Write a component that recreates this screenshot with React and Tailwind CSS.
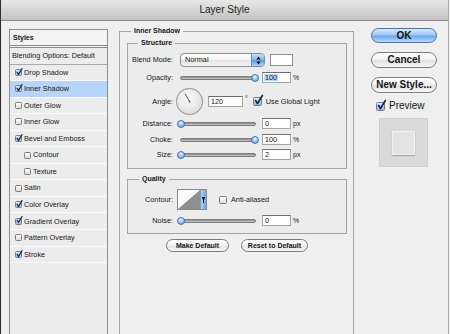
import React from "react";

function Check({ on, className = "" }) {
  return (
    <span
      className={`relative shrink-0 rounded-[1.5px] border border-[#7b7b7b] ${
        on
          ? "bg-[linear-gradient(to_bottom,#dcecfd,#8cbcf1)]"
          : "bg-[linear-gradient(to_bottom,#ffffff,#dcdcdc)]"
      } ${className}`}
    >
      {on && (
        <svg
          className="absolute left-[0px] top-[-25%] w-[125%] h-[125%] overflow-visible"
          viewBox="0 0 10 10"
        >
          <path
            d="M1.8 5.2 L4 8.6 L9.6 -0.6"
            fill="none"
            stroke="#14285c"
            strokeWidth="1.9"
            strokeLinecap="round"
            strokeLinejoin="round"
          />
        </svg>
      )}
    </span>
  );
}

const items = [
  ["Drop Shadow", true, 0, false],
  ["Inner Shadow", true, 0, true],
  ["Outer Glow", false, 0, false],
  ["Inner Glow", false, 0, false],
  ["Bevel and Emboss", true, 0, false],
  ["Contour", false, 1, false],
  ["Texture", false, 1, false],
  ["Satin", false, 0, false],
  ["Color Overlay", true, 0, false],
  ["Gradient Overlay", true, 0, false],
  ["Pattern Overlay", false, 0, false],
  ["Stroke", true, 0, false],
];

function StyleList() {
  return (
    <div className="mt-[8px] w-[99px] h-[320px] shrink-0 border border-[#8e8e8e] bg-[#ececec] flex flex-col">
      <div className="h-[18px] shrink-0 border-b-[3px] border-double border-[#8a8a8a] bg-[#f3f3f3] pl-[3px] flex items-center text-[7px] font-bold leading-none">
        Styles
      </div>
      <div className="h-[16.5px] shrink-0 border-b border-[#a9a9a9] pl-[2px] flex items-center text-[7.3px] leading-none">
        Blending Options: Default
      </div>
      {items.map(([label, on, lvl, sel]) => (
        <div
          key={label}
          className={`h-[16.55px] shrink-0 border-b border-[#fafafa] flex items-center gap-[2px] text-[7.3px] leading-none ${
            lvl ? "pl-[14px]" : "pl-[5px]"
          } ${sel ? "bg-[#b7d5f8]" : ""}`}
        >
          <Check on={on} className="w-[7px] h-[7px]" />
          <span>{label}</span>
        </div>
      ))}
    </div>
  );
}

function Slider({ value }) {
  return (
    <div className="relative ml-[4px] w-[82px] h-[9px] shrink-0 flex items-center">
      <div className="mx-[3px] flex-1 h-[4px] rounded-full border border-[#7c7c7c] bg-[linear-gradient(to_bottom,#8a8a8a,#c9c9c9)]" />
      <div
        className="absolute top-[0.5px] w-[8px] h-[8px] rounded-full border border-[#4a77b3] bg-[radial-gradient(circle_at_50%_30%,#eaf4ff,#86bbf1_60%,#4e8fdc)]"
        style={{ left: (value / 100) * 74 }}
      />
    </div>
  );
}

function Field({ children, className = "" }) {
  return (
    <div
      className={`h-[11px] shrink-0 border border-[#a4a4a4] border-t-[#6f6f6f] bg-white pl-[1px] flex items-center text-[7.3px] leading-none ${className}`}
    >
      {children}
    </div>
  );
}

function Label({ children }) {
  return (
    <span className="w-[45px] shrink-0 text-right text-[7.3px] leading-none">
      {children}
    </span>
  );
}

function SliderRow({ label, value, text, unit, sel, className = "" }) {
  return (
    <div className={`h-[11px] flex items-center ${className}`}>
      <Label>{label}</Label>
      <Slider value={value} />
      <Field className="ml-[3px] w-[29px]">
        {sel ? <span className="bg-[#b5d5fe] px-[1px]">{text}</span> : <span className="px-[1px]">{text}</span>}
      </Field>
      <span className="ml-[2px] text-[7px] leading-none">{unit}</span>
    </div>
  );
}

function Dial() {
  return (
    <svg width="29" height="29" viewBox="0 0 29 29" className="ml-[2px] shrink-0">
      <defs>
        <radialGradient id="dialg" cx="45%" cy="40%" r="65%">
          <stop offset="0" stopColor="#ffffff" />
          <stop offset="1" stopColor="#d9d9d9" />
        </radialGradient>
      </defs>
      <circle cx="14.5" cy="14.5" r="13.7" fill="#c9c9c9" />
      <circle cx="14.5" cy="14.5" r="13" fill="url(#dialg)" stroke="#8b8b8b" strokeWidth="0.8" />
      <line x1="14.5" y1="14.5" x2="10" y2="6.7" stroke="#444" strokeWidth="0.9" />
      <circle cx="14.5" cy="14.5" r="0.9" fill="#444" />
    </svg>
  );
}

function Main() {
  return (
    <fieldset className="mt-[5px] ml-[11px] w-[235px] h-[330px] min-w-0 shrink-0 border border-[#a5a5a5] pl-[7px] pr-[6px] pt-[2px]">
      <legend className="ml-[4px] px-[3px] text-[7px] font-bold leading-[10px]">
        Inner Shadow
      </legend>

      <fieldset className="min-w-0 border border-[#a5a5a5] bg-[#ececec] pt-[5px] pb-[8px]">
        <legend className="ml-[10px] px-[3px] text-[7px] font-bold leading-[10px]">
          Structure
        </legend>
        <div className="h-[14px] flex items-center">
          <Label>Blend Mode:</Label>
          <div className="ml-[7px] w-[85px] h-[14px] shrink-0 rounded-[4px] border border-[#8c8c8c] bg-[linear-gradient(to_bottom,#ffffff,#f2f2f2_50%,#e3e3e3_51%,#f5f5f5)] flex items-center overflow-hidden">
            <span className="flex-1 pl-[4px] text-[7.3px] leading-none">Normal</span>
            <div className="w-[13px] h-full border-l border-[#6a8fc2] bg-[linear-gradient(to_bottom,#c8e0fb,#80b4ef_50%,#5a9ae6_51%,#a9d0f8)] flex items-center justify-center">
              <svg width="5" height="9" viewBox="0 0 5 9">
                <path d="M2.5 0.6 L4.6 3.6 L0.4 3.6Z M2.5 8.4 L4.6 5.4 L0.4 5.4Z" fill="#111" />
              </svg>
            </div>
          </div>
          <div className="ml-[5px] w-[23px] h-[12px] shrink-0 border border-[#8f8f8f] bg-white" />
        </div>

        <SliderRow className="mt-[5px]" label="Opacity:" value={100} text="100" unit="%" sel />

        <div className="mt-[4px] h-[29px] flex items-center">
          <Label>Angle:</Label>
          <Dial />
          <Field className="ml-[4px] w-[35px]">
            <span className="px-[1px]">120</span>
          </Field>
          <span className="ml-[2px] self-start mt-[8px] text-[7px] leading-none">°</span>
          <Check on className="ml-[5px] w-[9px] h-[9px]" />
          <span className="ml-[4px] text-[7.3px] leading-none whitespace-nowrap">Use Global Light</span>
        </div>

        <SliderRow className="mt-[2px]" label="Distance:" value={0} text="0" unit="px" />
        <SliderRow className="mt-[5px]" label="Choke:" value={100} text="100" unit="%" />
        <SliderRow className="mt-[4px]" label="Size:" value={0} text="2" unit="px" />
      </fieldset>

      <fieldset className="mt-[5px] min-w-0 border border-[#a5a5a5] bg-[#ececec] pt-[5px] pb-[7px]">
        <legend className="ml-[11px] px-[3px] text-[7px] font-bold leading-[10px]">
          Quality
        </legend>
        <div className="h-[21px] flex items-center">
          <Label>Contour:</Label>
          <div className="ml-[4px] w-[30px] h-[21px] shrink-0 border border-[#8a8a8a] flex overflow-hidden">
            <svg className="w-[22px] h-full" viewBox="0 0 22 19" preserveAspectRatio="none">
              <rect width="22" height="19" fill="#ffffff" />
              <polygon points="0,19 22,0 22,19" fill="#8e8e8e" />
            </svg>
            <div className="flex-1 border-l border-[#7a9cc8] bg-[linear-gradient(to_right,#b3d4f8,#6ea8ea)] flex items-center justify-center">
              <svg width="3" height="6" viewBox="0 0 3 6">
                <path d="M0 0 H3 L2 3.6 V6 H1 V3.6Z" fill="#000" />
              </svg>
            </div>
          </div>
          <Check className="ml-[12px] w-[8px] h-[8px]" />
          <span className="ml-[4px] text-[7.3px] leading-none">Anti-aliased</span>
        </div>
        <SliderRow className="mt-[5px]" label="Noise:" value={0} text="0" unit="%" />
      </fieldset>

      <div className="mt-[5px] flex justify-center gap-[12px]">
        <button className="w-[63px] h-[13px] rounded-full border border-[#7b7b7b] bg-[linear-gradient(to_bottom,#ffffff,#f1f1f1_50%,#e2e2e2_51%,#f6f6f6)] text-[7px] font-bold leading-none">
          Make Default
        </button>
        <button className="w-[67px] h-[13px] rounded-full border border-[#7b7b7b] bg-[linear-gradient(to_bottom,#ffffff,#f1f1f1_50%,#e2e2e2_51%,#f6f6f6)] text-[7px] font-bold leading-none">
          Reset to Default
        </button>
      </div>
    </fieldset>
  );
}

function Right() {
  return (
    <div className="ml-[17px] mt-[7px] w-[66px] shrink-0 flex flex-col">
      <button className="h-[15px] rounded-full border border-[#4c72a8] bg-[linear-gradient(to_bottom,#d6e9fd,#9dc9f6_45%,#6aa9ed_55%,#b8dcfd)] text-[10px] font-bold leading-none">
        OK
      </button>
      <button className="mt-[9px] h-[16px] rounded-full border border-[#7e7e7e] bg-[linear-gradient(to_bottom,#ffffff,#f3f3f3_45%,#e1e1e1_55%,#f7f7f7)] text-[10px] font-bold leading-none">
        Cancel
      </button>
      <button className="mt-[9px] h-[16px] rounded-full border border-[#7e7e7e] bg-[linear-gradient(to_bottom,#ffffff,#f3f3f3_45%,#e1e1e1_55%,#f7f7f7)] text-[10px] font-bold leading-none whitespace-nowrap">
        New Style...
      </button>
      <div className="mt-[8px] h-[10px] pl-[5px] flex items-center gap-[4px]">
        <Check on className="w-[9px] h-[9px]" />
        <span className="text-[10px] leading-none">Preview</span>
      </div>
      <div className="mt-[7px] ml-[8px] w-[49px] h-[49px] border border-[#cfcfcf] bg-[#d9d9d9] bg-[radial-gradient(#c9c9c9_0.6px,transparent_0.7px)] bg-[length:2px_2px] flex items-center justify-center">
        <div className="w-[23px] h-[24px] border border-[#f1f1f1] bg-[#e3e3e3] shadow-[0_1px_1px_#a6a6a6]" />
      </div>
    </div>
  );
}

export default function App() {
  return (
    <div className="w-[450px] h-[334px] bg-[#f6f6f6]">
      <div className="w-[449px] h-[334px] overflow-hidden bg-[#efefef] border-l border-r border-l-[#2e2e2e] border-r-[#a9a9a9] flex flex-col font-['Liberation_Sans',Arial,sans-serif] text-[#161616]">
        <div className="h-[21px] shrink-0 border-b border-[#8c8c8c] bg-[linear-gradient(to_bottom,#e8e8e8,#c2c2c2)] flex items-center justify-center text-[10px] leading-none text-[#222]">
          Layer Style
        </div>
        <div className="flex-1 flex items-start pl-[8px]">
          <StyleList />
          <Main />
          <Right />
        </div>
      </div>
    </div>
  );
}
